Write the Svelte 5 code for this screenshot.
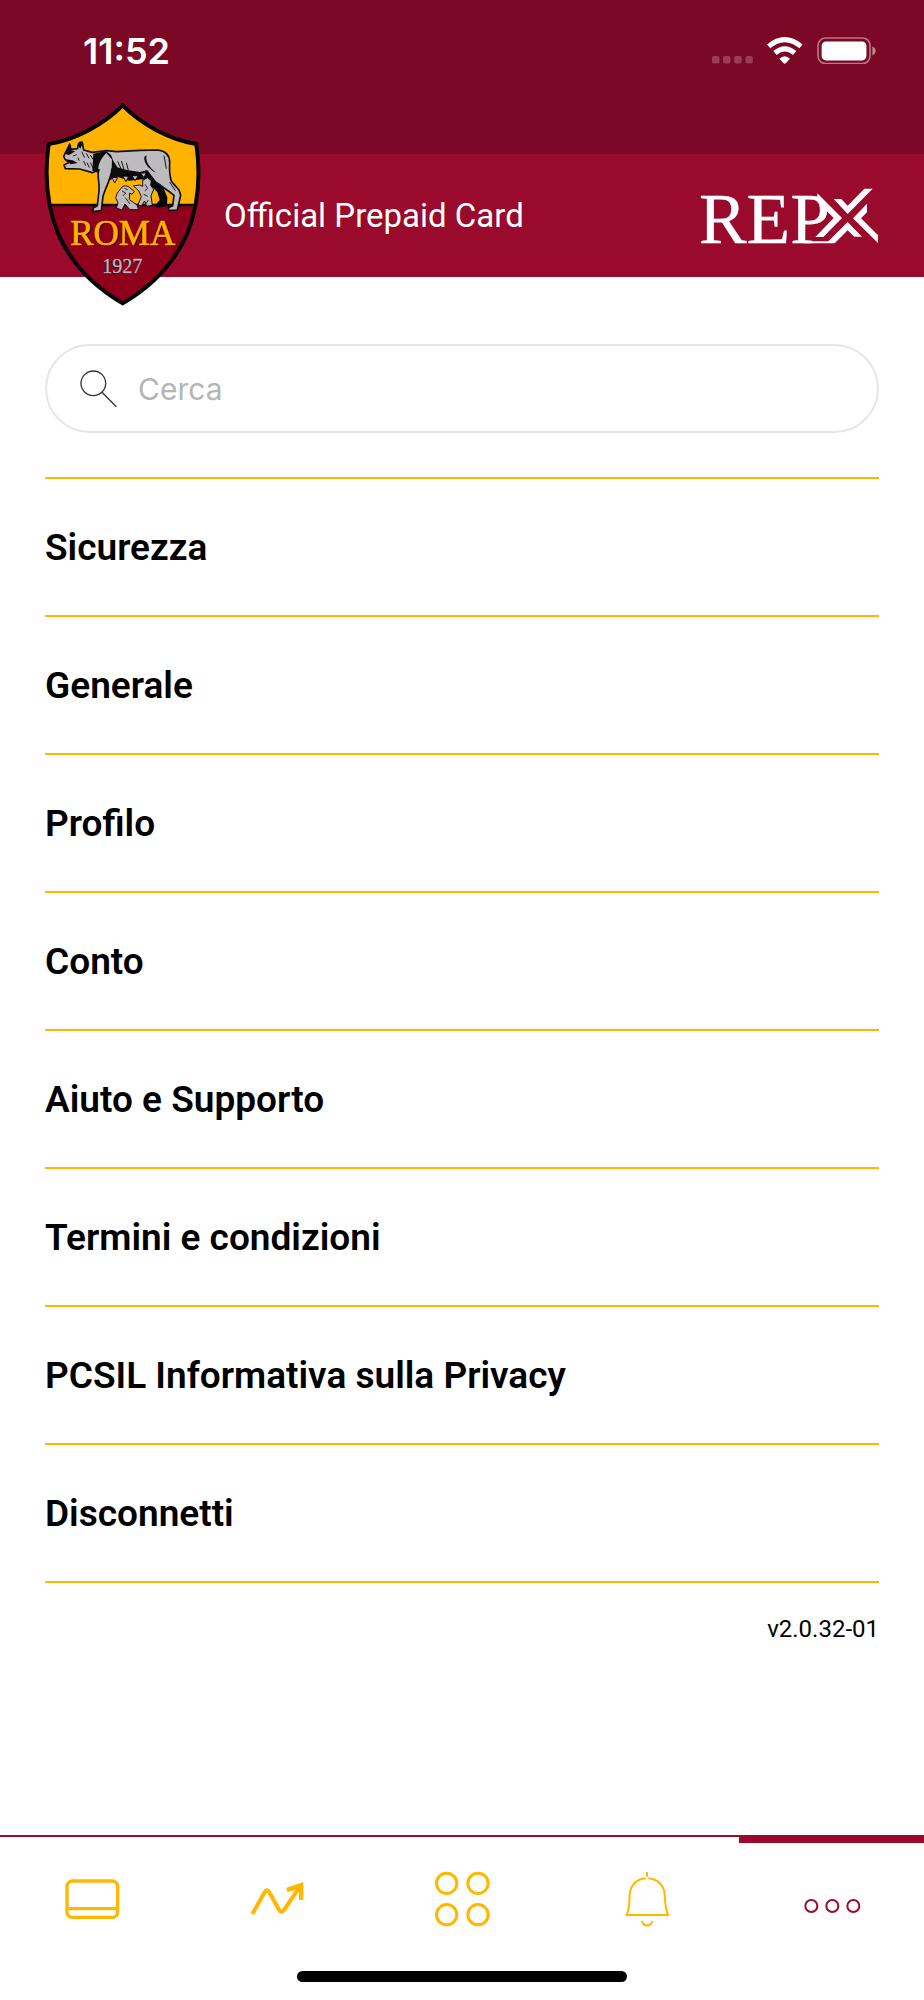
<script>
  const sections = [
    'Sicurezza',
    'Generale',
    'Profilo',
    'Conto',
    'Aiuto e Supporto',
    'Termini e condizioni',
    'PCSIL Informativa sulla Privacy',
    'Disconnetti'
  ];
  let query = $state('');
</script>

<div class="page">
  <div class="status">
    <span class="time">11:52</span>
    <div class="indicators">
      <svg width="41" height="27" viewBox="0 0 41 27" aria-hidden="true">
        <g fill="#fff" fill-opacity=".22">
          <rect x="0" y="19" width="7.5" height="7.5" rx="2" />
          <rect x="11" y="19" width="7.5" height="7.5" rx="2" />
          <rect x="22.2" y="19" width="7.5" height="7.5" rx="2" />
          <rect x="33.3" y="19" width="7.5" height="7.5" rx="2" />
        </g>
      </svg>
      <svg width="36" height="27" viewBox="232 50 108 81" aria-hidden="true">
        <g fill="none" stroke="#fff" stroke-width="15">
          <path d="M237 78Q285 38 334 78" />
          <path d="M256 98Q285 73 315 98" />
        </g>
        <path fill="#fff" d="M269 115Q285 100 301 115L289 128Q285 132 281 128Z" />
      </svg>
      <svg width="60" height="27" viewBox="382 49 180 82" aria-hidden="true">
        <rect x="384" y="52" width="158" height="78" rx="23" fill="none" stroke="#fff" stroke-opacity=".45" stroke-width="5" />
        <rect x="395" y="63" width="136" height="57" rx="13" fill="#fff" />
        <path d="M549 78Q559 82 559 91T549 105Z" fill="#fff" fill-opacity=".5" />
      </svg>
    </div>
  </div>

  <header>
    <svg class="crest" viewBox="45 36 465 612" role="img" aria-label="Roma 1927">
      <clipPath id="shield">
        <path d="M278 44C222 101 137 147 54 160C39 261 48 348 82 431C121 521 190 592 278 643C366 592 435 521 474 431C508 348 516 261 501 160C418 147 334 101 278 44Z" />
      </clipPath>
      <g clip-path="url(#shield)">
        <rect x="40" y="30" width="480" height="315" fill="#ffb300" />
        <rect x="40" y="345" width="480" height="310" fill="#8f001c" />
        <path d="M40 345H520" stroke="#080808" stroke-width="7" />
      </g>
      <path d="M278 46C222 103 137 149 56 162C42 261 51 348 84 430C123 519 192 590 278 640C364 590 433 519 472 430C505 348 513 261 499 162C418 149 334 103 278 46Z" fill="none" stroke="#050505" stroke-width="12" />

      <!-- far legs and belly shadow -->
      <path fill="#080808" d="M206 220L246 202L306 238L362 242L398 288L412 322L411 348L380 354L376 344L389 330L382 306L352 278L336 268L298 272L262 260L240 270L225 304Z" />
      <!-- body -->
      <path fill="#bdbbbd" stroke="#111" stroke-width="5" stroke-linejoin="round" d="M110 182L119 162L123 178L143 176C142 162 148 154 157 157L161 180L186 187L230 182L260 185L330 181L383 180C409 183 419 198 419 217C418 239 417 257 425 275L447 300L452 316L442 360L418 362L415 353L428 347L432 316C418 304 400 293 386 282C369 271 354 263 342 250L318 253L284 249C272 249 258 247 246 237C243 266 227 291 219 319L214 362L188 365L190 354L202 347L207 303C210 277 199 256 207 239L187 248L149 237L106 236L102 225L118 217L106 209L101 199Z" />
      <path fill="#0c0c0c" d="M103 190L119 160L124 181L136 184L116 196ZM143 166L151 156L158 162L151 176ZM103 207L128 211L143 219L122 223ZM190 191L226 184C242 190 247 199 248 211L229 189C211 207 204 223 204 248L187 242Z" />
      <path fill="#0c0c0c" d="M246 206L262 232L290 240L330 246L352 240L384 282L346 262L330 254L284 252L262 256L244 268ZM350 196C345 214 358 232 378 248C358 238 340 220 343 200Z" />
      <path fill="none" stroke="#171717" stroke-width="3" d="M155 185L164 203M169 190L177 205M181 195L190 209M161 213L167 227M171 218L178 233M181 218L190 236M129 198L140 194M144 203L147 212M263 214L273 236M274 213L284 244M289 218L295 241M402 197L409 236M419 276L436 302" />
      <path fill="#bdbbbd" stroke="#0a0a0a" stroke-width="3" d="M246 262L254 279L263 263ZM278 258L288 275L296 259ZM306 257L315 272L325 257ZM332 250L342 263L349 248Z" />
      <!-- twins -->
      <path fill="#bdbbbd" stroke="#111" stroke-width="3" stroke-linejoin="round" d="M274 294C279 285 294 286 300 294L313 304L306 313L299 309L298 329L321 345L326 359H300L285 342L276 360L259 354L264 339L257 323L262 309ZM310 288L329 285L338 289L338 271L352 263L364 272L362 286L371 298L363 317L367 346L350 349L344 333L334 348L324 344L334 320L326 302Z" />
      <path fill="none" stroke="#252525" stroke-width="3" d="M276 303L287 309L278 318M286 323L300 342M345 283L353 295L344 303M341 313L353 319M283 295L293 299M355 330L348 341" />

      <g font-family="'Liberation Serif', serif" text-anchor="middle">
        <text x="282" y="468" font-size="105" fill="#220008">ROMA</text>
        <text x="278" y="465" font-size="105" fill="#ffb300" stroke="#ffb300" stroke-width="2">ROMA</text>
        <text x="273" y="551" font-size="60" fill="#26000a">1927</text>
        <text x="277" y="549" font-size="60" fill="#bbb9bc" stroke="#bbb9bc">1927</text>
      </g>
    </svg>
    <span class="tagline">Official Prepaid Card</span>
    <svg class="repx" viewBox="60 48 540 174" role="img" aria-label="REPX">
      <text x="60" y="215" font-family="'Liberation Serif', serif" font-size="214" fill="#fff" stroke="#fff" stroke-width="1">REP</text>
      <path d="M418 60L497 141L437 204L405 199L466 141L438 112Z" fill="#990a2c" />
      <g fill="#fff">
        <path d="M415 67L489 141L433 198H409L464 141L432 109L415 91Z" />
        <path d="M464 84H487L506 104L556 53H581L506 129Z" />
        <path d="M564 98V124L546 142L597 193V216L522 142Z" />
        <path d="M506 153L549 197H526L506 178L467 217H374V211H448Z" />
      </g>
    </svg>
  </header>

  <main>
    <label class="search">
      <svg width="38" height="38" viewBox="149 119 114 114" aria-hidden="true">
        <g fill="none" stroke="#333" stroke-width="4">
          <circle cx="189" cy="159" r="37" />
          <path d="M215 186L258 229" />
        </g>
      </svg>
      <input type="search" placeholder="Cerca" aria-label="Cerca" bind:value={query} />
    </label>

    <ul>
      {#each sections as section}
        <li><button type="button">{section}</button></li>
      {/each}
    </ul>
    <p class="version">v2.0.32-01</p>
  </main>

  <nav>
    <div class="tabs">
      <button type="button" aria-label="Carta">
        <svg viewBox="193 152 168 168" fill="none" stroke="#ffb700" stroke-width="10">
          <rect x="202" y="182" width="152" height="109" rx="16" />
          <path d="M207 265H349" />
        </svg>
      </button>
      <button type="button" aria-label="Movimenti">
        <svg viewBox="747 152 168 168" fill="none" stroke="#ffb700">
          <path d="M757 281L794 216Q801 204 808 216L837 268Q844 280 852 269L900 199" stroke-width="12" />
          <path d="M859 202L910 185V239H897V207L862 215Z" fill="#ffb700" stroke="none" />
        </svg>
      </button>
      <button type="button" aria-label="Servizi">
        <svg viewBox="1302 152 168 168" fill="none" stroke="#ffb700" stroke-width="9">
          <circle cx="1340" cy="189" r="30.5" />
          <circle cx="1434" cy="189" r="30.5" />
          <circle cx="1340" cy="283" r="30.5" />
          <circle cx="1434" cy="283" r="30.5" />
        </svg>
      </button>
      <button type="button" aria-label="Notifiche">
        <svg viewBox="476 152 168 168" fill="none" stroke="#ffb700" stroke-width="6">
          <path d="M560 155V169M556 174C529 176 510 195 508 222C508 247 506 268 499 284H623C616 268 614 247 613 222C611 195 592 176 564 174" />
          <path d="M545 302C550 320 571 320 576 302" />
        </svg>
      </button>
      <button class="active" type="button" aria-label="Altro" aria-current="page">
        <svg viewBox="1031 152 168 168" fill="none" stroke="#990a2c" stroke-width="6">
          <circle cx="1053" cy="257" r="18" />
          <circle cx="1116" cy="257" r="18" />
          <circle cx="1179" cy="257" r="18" />
        </svg>
      </button>
    </div>
    <div class="home"></div>
  </nav>
</div>

<style>
  :global(body) { margin: 0; background: #fff; }
  .page {
    min-height: 100vh;
    display: flex;
    flex-direction: column;
    font-family: Roboto, sans-serif;
    color: #000;
  }
  .status {
    box-sizing: border-box;
    height: 154px;
    padding: 30px 47px 0 83px;
    display: flex;
    justify-content: space-between;
    align-items: flex-start;
    background: #7b0824;
    color: #fff;
  }
  .time { font: 600 36px/42px Inter, sans-serif; }
  .indicators { display: flex; gap: 14px; padding-top: 7px; }
  header {
    height: 123px;
    padding: 0 45px;
    display: flex;
    align-items: center;
    background: #990a2c;
    color: #fff;
  }
  .crest {
    align-self: flex-start;
    flex: none;
    width: 155px;
    height: 204px;
    margin: -52px 24px -29px 0;
    overflow: visible;
  }
  .tagline { flex: 1; font-size: 33px; line-height: 40px; }
  .repx { width: 180px; height: 58px; overflow: visible; }
  main { padding: 67px 45px 40px; }
  .search {
    display: flex;
    align-items: center;
    gap: 20px;
    height: 85px;
    padding: 0 33px;
    border: 2px solid #e6e6e6;
    border-radius: 45px;
  }
  .search input {
    flex: 1;
    min-width: 0;
    padding: 0;
    border: 0;
    outline: 0;
    background: none;
    font: 400 30px/40px Inter, sans-serif;
    color: #333;
  }
  .search input::placeholder { color: #b5b5b5; opacity: 1; }
  ul {
    list-style: none;
    margin: 44px 0 0;
    padding: 0;
    border-top: 2px solid #ffb700;
  }
  li { border-bottom: 2px solid #ffb700; }
  li button {
    display: block;
    width: 100%;
    padding: 47px 0 45px;
    border: 0;
    background: none;
    text-align: left;
    font: 600 37px/44px Roboto, sans-serif;
    color: #000;
  }
  .version { margin: 30px 0 0; text-align: right; font-size: 24px; line-height: 32px; }
  nav { margin-top: auto; border-top: 2px solid #990a2c; }
  .tabs { display: grid; grid-template-columns: repeat(5, 1fr); }
  .tabs button {
    display: flex;
    align-items: center;
    justify-content: center;
    height: 124px;
    padding: 0;
    border: 0;
    background: none;
  }
  .tabs .active { box-shadow: inset 0 6px #990a2c; }
  .tabs svg { width: 56px; height: 56px; overflow: visible; }
  .home {
    width: 330px;
    max-width: 60%;
    height: 11px;
    margin: 10px auto 18px;
    border-radius: 6px;
    background: #000;
  }
</style>
